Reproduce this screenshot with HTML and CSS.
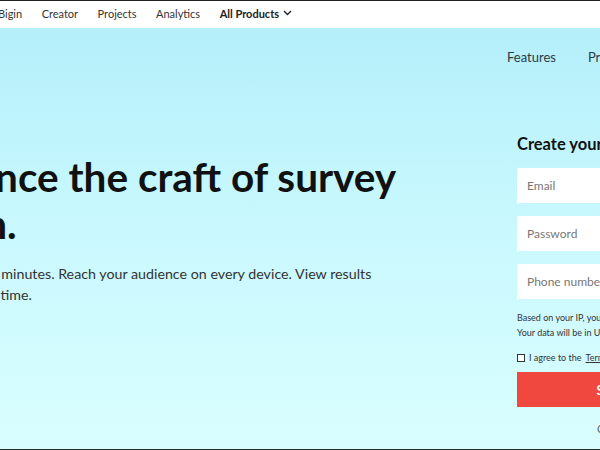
FILE: index.html
```html
<!DOCTYPE html>
<html lang="en">
<head>
<meta charset="utf-8">
<title>Zoho Survey</title>
<link rel="stylesheet" href="styles.css">
</head>
<body>
<div class="page">
  <nav class="topbar">
    <a class="top-link">Bigin</a>
    <a class="top-link">Creator</a>
    <a class="top-link">Projects</a>
    <a class="top-link">Analytics</a>
    <a class="top-link top-strong">All Products
      <svg class="chev" width="9" height="6" viewBox="0 0 9 6"><path d="M1 1l3.5 3.5L8 1" fill="none" stroke="#222" stroke-width="1.4"/></svg>
    </a>
  </nav>
  <main class="hero">
    <nav class="hero-nav">
      <a class="hero-link">Features</a>
      <a class="hero-link">Pricing</a>
      <a class="hero-link">Templates</a>
    </nav>
    <div class="hero-body">
      <section class="intro">
        <h1 class="headline">Experience the craft of survey creation.</h1>
        <p class="lede">Create your surveys in minutes. Reach your audience on every device. View results<br>then analyze all in real time.</p>
      </section>
      <form class="signup">
        <h2 class="signup-title">Create your account</h2>
        <div class="field">Email</div>
        <div class="field">Password</div>
        <div class="field">Phone number</div>
        <p class="note">Based on your IP, your country is United States.<br>Your data will be in US data center.</p>
        <label class="agree"><span class="box"></span>I agree to the <u>Terms of Service</u> and <u>Privacy Policy</u>.</label>
        <div class="btn">SIGN UP FOR FREE</div>
        <p class="alt">Or sign in using</p>
      </form>
    </div>
  </main>
</div>
</body>
</html>
```
FILE: styles.css
```css
* { box-sizing: border-box; }
html, body { margin: 0; padding: 0; }
body { width: 600px; height: 450px; overflow: hidden; font-family: Lato, "Open Sans", sans-serif; }
.page {
  width: 600px; height: 450px; overflow: hidden;
  border-top: 1px solid #222; border-bottom: 1px solid #2b3030;
  display: flex; flex-direction: column;
}
.topbar {
  height: 27px; flex: none; background: #fff;
  display: flex; align-items: center; gap: 19.5px;
  margin-left: -2px; padding-bottom: 3px; white-space: nowrap;
  font-size: 11px; color: #333;
}
.top-strong { font-weight: 700; color: #222; display: flex; align-items: center; gap: 4px; }
.hero {
  flex: 1;
  background: linear-gradient(#b4effa 0%, #c8f8fe 45%, #d9feff 100%);
  overflow: hidden;
}
.hero-nav {
  display: flex; gap: 32px; padding: 21px 0 0 507px;
  white-space: nowrap; font-size: 13px; color: #2d3b44;
}
.hero-body { display: flex; align-items: flex-start; margin-top: 69px; }
.intro { flex: none; width: 640px; margin-left: -141px; padding-top: 19px; }
.headline {
  margin: 0; font-size: 40.5px; line-height: 47px; font-weight: 700; color: #111;
  width: 590px;
}
.lede { margin: 16px 0 0; font-size: 14.25px; line-height: 21px; color: #333; }
.signup { flex: none; width: 278px; margin-left: 18px; }
.signup-title { margin: 0 0 14px; font-size: 16.5px; line-height: 20px; font-weight: 700; color: #111; }
.field {
  height: 35px; background: #fff;
  padding-left: 10px; display: flex; align-items: center;
  font-size: 12px; color: #777;
}
.field + .field { margin-top: 13px; }
.note { margin: 11px 0 0; font-size: 9px; line-height: 15px; color: #333; }
.agree { display: flex; align-items: center; gap: 4px; margin-top: 12px; font-size: 9px; color: #333; white-space: nowrap; }
.box { width: 8px; height: 8px; border: 1px solid #333; background: #fff; }
.btn {
  margin-top: 9px; height: 35px; background: #f0483e; color: #fff;
  display: flex; align-items: center; justify-content: center;
  font-size: 13px; font-weight: 700; letter-spacing: 0.3px;
}
.alt { margin: 15px 0 0; padding-left: 80px; white-space: nowrap; font-size: 11px; color: #666; }
```
